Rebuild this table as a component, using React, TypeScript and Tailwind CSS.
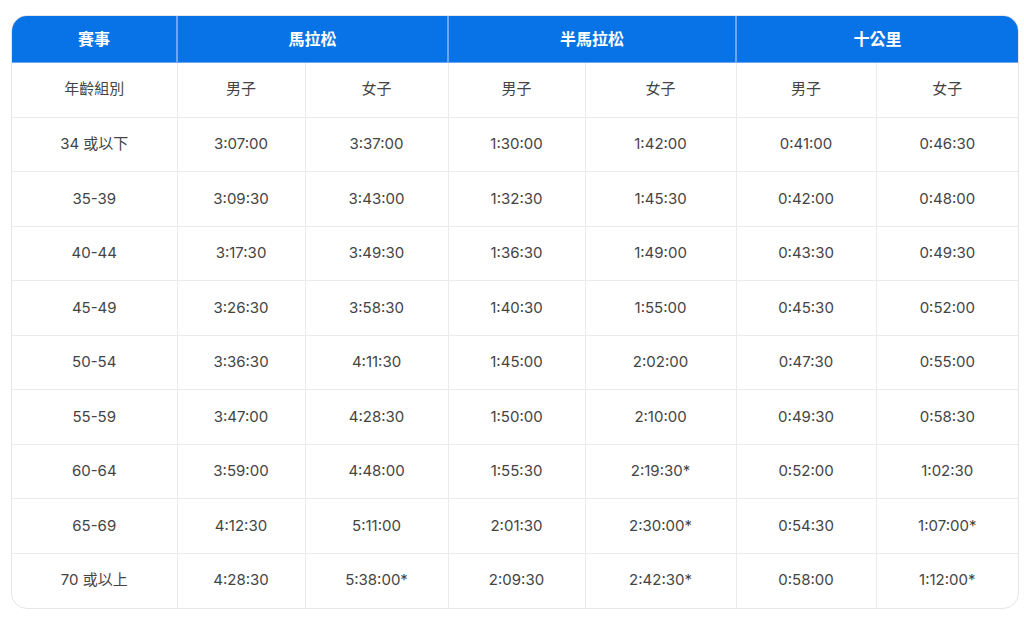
const rows: string[][] = [
  ["34 或以下", "3:07:00", "3:37:00", "1:30:00", "1:42:00", "0:41:00", "0:46:30"],
  ["35-39", "3:09:30", "3:43:00", "1:32:30", "1:45:30", "0:42:00", "0:48:00"],
  ["40-44", "3:17:30", "3:49:30", "1:36:30", "1:49:00", "0:43:30", "0:49:30"],
  ["45-49", "3:26:30", "3:58:30", "1:40:30", "1:55:00", "0:45:30", "0:52:00"],
  ["50-54", "3:36:30", "4:11:30", "1:45:00", "2:02:00", "0:47:30", "0:55:00"],
  ["55-59", "3:47:00", "4:28:30", "1:50:00", "2:10:00", "0:49:30", "0:58:30"],
  ["60-64", "3:59:00", "4:48:00", "1:55:30", "2:19:30*", "0:52:00", "1:02:30"],
  ["65-69", "4:12:30", "5:11:00", "2:01:30", "2:30:00*", "0:54:30", "1:07:00*"],
  ["70 或以上", "4:28:30", "5:38:00*", "2:09:30", "2:42:30*", "0:58:00", "1:12:00*"],
];

const colWidths = ["w-[165px]", "w-[128px]", "w-[143px]", "w-[137px]", "w-[151px]", "w-[140px]", "w-[142px]"];

export default function App() {
  return (
    <div className="w-[1024px] h-[624px] bg-white pt-[15px] pl-[11px] font-['Inter','Noto_Sans_CJK_TC',sans-serif]">
      <div className="w-[1008px] rounded-2xl border border-[#e6e6e6] overflow-hidden">
        <table className="w-full table-fixed border-collapse text-[15px] text-[#444]">
          <colgroup>
            {colWidths.map((w, i) => <col key={i} className={w} />)}
          </colgroup>
          <thead>
            <tr className="h-[46px] bg-[#0873e6] text-white text-base font-bold">
              <th className="border-b border-[#6aa7f0]">賽事</th>
              <th colSpan={2} className="border-l-2 border-b border-l-[#6aa7f0] border-b-[#6aa7f0]">馬拉松</th>
              <th colSpan={2} className="border-l-2 border-b border-l-[#6aa7f0] border-b-[#6aa7f0]">半馬拉松</th>
              <th colSpan={2} className="border-l-2 border-b border-l-[#6aa7f0] border-b-[#6aa7f0]">十公里</th>
            </tr>
          </thead>
          <tbody>
            <tr className="h-[55px]">
              <td className="text-center">年齡組別</td>
              {["男子", "女子", "男子", "女子", "男子", "女子"].map((t, i) => (
                <td key={i} className="text-center border-l border-[#ebebeb]">{t}</td>
              ))}
            </tr>
            {rows.map((r) => (
              <tr key={r[0]} className="h-[54.5px] border-t border-[#ebebeb]">
                {r.map((c, i) => (
                  <td key={i} className={i === 0 ? "text-center" : "text-center border-l border-[#ebebeb]"}>{c}</td>
                ))}
              </tr>
            ))}
          </tbody>
        </table>
      </div>
    </div>
  );
}
